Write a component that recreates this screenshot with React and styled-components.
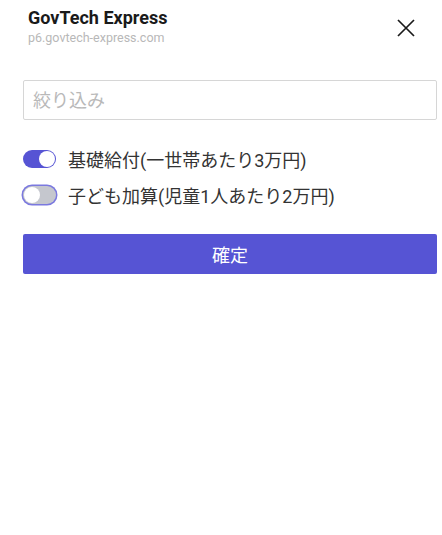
import React, { useState } from 'react';
import styled, { createGlobalStyle } from 'styled-components';

const GlobalStyle = createGlobalStyle`
  html, body {
    margin: 0;
    padding: 0;
    background: #ffffff;
    font-family: Roboto, "Noto Sans CJK JP", sans-serif;
  }
`;

const Page = styled.div`
  width: 442px;
  height: 535px;
  background: #fff;
  box-sizing: border-box;
  padding: 0 5px 0 23px;
`;

const Header = styled.div`
  display: flex;
  align-items: flex-start;
  justify-content: space-between;
  padding: 7px 0 0 5px;
  height: 72px;
  box-sizing: border-box;
`;

const TitleBox = styled.div`
  display: flex;
  flex-direction: column;
`;

const Title = styled.div`
  font-size: 18px;
  font-weight: 700;
  color: #1a1a1a;
  line-height: 22px;
`;

const Subtitle = styled.div`
  font-size: 12.5px;
  color: #b8b8b8;
  line-height: 18px;
`;

const CloseButton = styled.button`
  border: none;
  background: none;
  padding: 0;
  margin: 11px 21px 0 0;
  width: 20px;
  height: 20px;
  display: flex;
  align-items: center;
  justify-content: center;
`;

const SearchInput = styled.input`
  display: block;
  width: 414px;
  height: 40px;
  box-sizing: border-box;
  border: 1px solid #d6d6d6;
  border-radius: 2px;
  padding: 0 9px;
  font-size: 18px;
  font-family: Roboto, "Noto Sans CJK JP", sans-serif;
  color: #333;
  margin-top: 8px;
  outline: none;
  &::placeholder {
    color: #b9b9b9;
  }
`;

const OptionList = styled.div`
  display: flex;
  flex-direction: column;
  gap: 16px;
  margin-top: 29px;
`;

const OptionRow = styled.label`
  display: flex;
  align-items: center;
  gap: 12px;
  height: 20px;
  font-size: 18px;
  color: #333;
  cursor: pointer;
`;

const Track = styled.span`
  position: relative;
  width: 33px;
  height: 18px;
  border-radius: 9px;
  box-sizing: border-box;
  background: ${p => (p.$on ? '#5654d4' : '#c5c7ce')};
  box-shadow: ${p => (p.$focus ? '0 0 0 1.5px #7b79df' : 'none')};
  flex-shrink: 0;
`;

const Thumb = styled.span`
  position: absolute;
  top: 1px;
  left: ${p => (p.$on ? '16px' : '1px')};
  width: 16px;
  height: 16px;
  border-radius: 50%;
  background: #fff;
`;

const ConfirmButton = styled.button`
  display: block;
  width: 414px;
  height: 40px;
  margin-top: 29px;
  border: none;
  border-radius: 2px;
  background: #5654d4;
  color: #fff;
  font-size: 18px;
  font-family: Roboto, "Noto Sans CJK JP", sans-serif;
`;

const options = [
  { id: 'basic', label: '基礎給付(一世帯あたり3万円)', on: true },
  { id: 'child', label: '子ども加算(児童1人あたり2万円)', on: false, focus: true },
];

export default function App() {
  const [state, setState] = useState(options);
  const toggle = id =>
    setState(s => s.map(o => (o.id === id ? { ...o, on: !o.on } : o)));

  return (
    <Page>
      <GlobalStyle />
      <Header>
        <TitleBox>
          <Title>GovTech Express</Title>
          <Subtitle>p6.govtech-express.com</Subtitle>
        </TitleBox>
        <CloseButton aria-label="close">
          <svg width="18" height="18" viewBox="0 0 18 18">
            <path d="M1 1L17 17M17 1L1 17" stroke="#1a1a1a" strokeWidth="1.7" />
          </svg>
        </CloseButton>
      </Header>
      <SearchInput placeholder="絞り込み" />
      <OptionList>
        {state.map(o => (
          <OptionRow key={o.id} onClick={() => toggle(o.id)}>
            <Track $on={o.on} $focus={o.focus}>
              <Thumb $on={o.on} />
            </Track>
            {o.label}
          </OptionRow>
        ))}
      </OptionList>
      <ConfirmButton>確定</ConfirmButton>
    </Page>
  );
}
